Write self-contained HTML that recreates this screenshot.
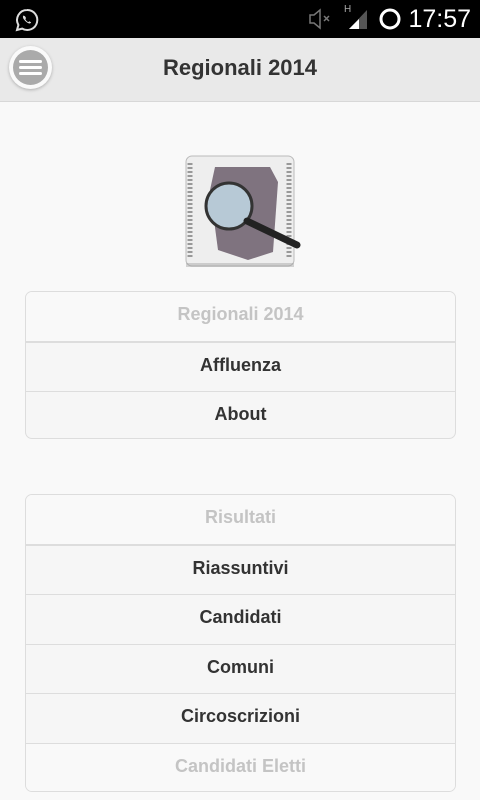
<!DOCTYPE html>
<html><head><meta charset="utf-8"><style>
*{margin:0;padding:0;box-sizing:border-box}
body{width:480px;height:800px;overflow:hidden;background:#f9f9f9;font-family:"Liberation Sans",sans-serif;position:relative}
.sb{position:absolute;left:0;top:0;width:480px;height:38px;background:#000}
.time{position:absolute;right:9px;top:5px;color:#fff;font-size:25px;font-family:"Liberation Sans",sans-serif}
.hd{position:absolute;left:0;top:38px;width:480px;height:64px;background:#e9e9e9;border-bottom:1px solid #d8d8d8}
.hd h1{position:absolute;left:0;right:0;top:17px;text-align:center;font-size:22px;font-weight:bold;color:#333}
.menu{position:absolute;left:9px;top:8px;width:43px;height:43px;border-radius:50%;background:#fafafa;box-shadow:0 1px 3px rgba(0,0,0,.25)}
.menu i{position:absolute;left:4px;top:4px;width:35px;height:35px;border-radius:50%;background:#aaa}
.menu b{position:absolute;left:10px;width:23px;height:3px;background:#fff;border-radius:2px}
.list{position:absolute;left:25px;width:431px;border:1px solid #ddd;border-radius:7px;overflow:hidden;background:#f6f6f6}
.list div{height:49.5px;line-height:45px;text-align:center;font-weight:bold;font-size:18px;color:#333;border-top:1px solid #ddd}
.list div.h{color:#c4c4c4;background:#f9f9f9;border-top:none;border-bottom:1px solid #ddd}
.list div.h+div{border-top:1px solid #ddd}
</style></head><body>
<div class="sb">
<svg style="position:absolute;left:14px;top:7px" width="26" height="26" viewBox="0 0 26 26"><path d="M13 3a10 10 0 0 0-8.6 15L3 23l5.2-1.4A10 10 0 1 0 13 3z" fill="none" stroke="#ddd" stroke-width="2"/><path d="M9.5 8.5c-.8.8-.8 2.2.5 4s3 3.3 4.8 3.9c1.2.4 2-.2 2.3-1l-1.8-1.1-1 .8c-1.3-.6-2.4-1.7-3-3l.8-1-1.1-1.9z" fill="#ddd"/></svg>
<svg style="position:absolute;left:308px;top:8px" width="28" height="22" viewBox="0 0 28 22"><path d="M2 7h4l6-5v18l-6-5H2z" fill="none" stroke="#777" stroke-width="1.5"/><path d="M16 8l5 5M21 8l-5 5" stroke="#777" stroke-width="1.5"/></svg>
<div style="position:absolute;left:344px;top:4px;color:#aaa;font-size:10px">H</div>
<svg style="position:absolute;left:347px;top:8px" width="22" height="22" viewBox="0 0 22 22"><path d="M2 21L20 2v19z" fill="#555"/><path d="M2 21l10-10v10z" fill="#fff"/></svg>
<svg style="position:absolute;left:378px;top:7px" width="24" height="24" viewBox="0 0 24 24"><circle cx="12" cy="12" r="9" fill="none" stroke="#fff" stroke-width="3"/></svg>
<div class="time">17:57</div>
</div>
<div class="hd"><div class="menu"><i></i><b style="top:14px"></b><b style="top:20px"></b><b style="top:26px"></b></div><h1>Regionali 2014</h1></div>
<svg style="position:absolute;left:183px;top:153px" width="120" height="118" viewBox="0 0 120 118">
<rect x="3" y="3" width="108" height="110" rx="6" fill="#eee" stroke="#bbb"/>
<rect x="3" y="110" width="108" height="4" fill="#999" opacity=".4"/>
<path d="M7 10v95M106 10v95" stroke="#999" stroke-width="5" stroke-dasharray="2 2"/>
<path d="M32 14h55l8 15-5 70-25 8-30-10-8-60z" fill="#7f737f"/>
<circle cx="46" cy="53" r="23" fill="#b7c9d6" stroke="#333" stroke-width="3"/>
<path d="M64 68l50 24" stroke="#222" stroke-width="7" stroke-linecap="round"/>
</svg>
<div class="list" style="top:291px;height:148px"><div class="h">Regionali 2014</div><div>Affluenza</div><div>About</div></div>
<div class="list" style="top:494px;height:298px"><div class="h">Risultati</div><div>Riassuntivi</div><div>Candidati</div><div>Comuni</div><div>Circoscrizioni</div><div class="h" style="border-bottom:none;border-top:1px solid #ddd">Candidati Eletti</div></div>
</body></html>
